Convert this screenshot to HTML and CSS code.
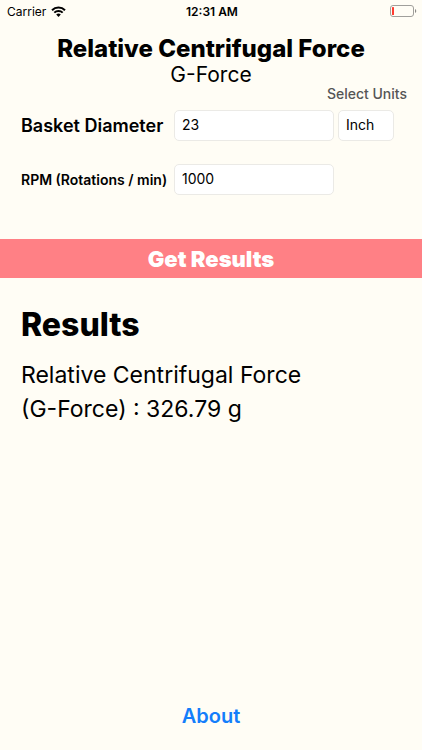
FILE: index.html
```html
<!DOCTYPE html>
<html lang="en">
  <head>
    <meta charset="UTF-8" />
    <meta name="viewport" content="width=device-width, initial-scale=1.0" />
    <link rel="stylesheet" href="styles.css">
    <title>Relative Centrifugal Force</title>
  </head>

  <body>
    <div class="status-bar">
      <div class="carrier">
        <span>Carrier</span>
        <svg class="wifi" viewBox="0 0 15 11" width="15" height="11">
          <path d="M1 4.2a9.2 9.2 0 0 1 13 0M3.3 6.6a6 6 0 0 1 8.4 0" fill="none" stroke="#000" stroke-width="2" />
          <path d="M7.5 11L5.2 8.6a3.3 3.3 0 0 1 4.6 0z" />
        </svg>
      </div>
      <div class="time">12:31 AM</div>
      <div class="battery">
        <svg viewBox="0 0 27 12" width="27" height="12">
          <rect x="0.5" y="0.5" width="23" height="11" rx="2.5" fill="none" stroke="#a09f9b" />
          <rect x="2" y="2" width="2" height="8" rx="0.6" fill="#ff3b30" />
          <path d="M25 4a2.2 2.2 0 0 1 0 4z" fill="#8c8b88" />
        </svg>
      </div>
    </div>

    <header class="heading">
      <h1>Relative Centrifugal Force</h1>
      <p>G-Force</p>
    </header>

    <form class="calc">
      <label class="units-label" for="units">Select Units</label>
      <div class="row">
        <label for="diameter">Basket Diameter</label>
        <input class="number" id="diameter" type="text" value="23">
        <select id="units">
          <option>Inch</option>
          <option>cm</option>
          <option>mm</option>
        </select>
      </div>
      <div class="row">
        <label class="small" for="rpm">RPM (Rotations / min)</label>
        <input class="number" id="rpm" type="text" value="1000">
      </div>
      <button class="submit" type="button">Get Results</button>
    </form>

    <main class="results">
      <h2>Results</h2>
      <p>Relative Centrifugal Force (G-Force) : 326.79 g</p>
    </main>

    <footer class="footer">
      <a href="#about">About</a>
    </footer>
  </body>
</html>
```
FILE: styles.css
```css
* {
  box-sizing: border-box;
}

body {
  display: flex;
  flex-direction: column;
  min-height: 100vh;
  margin: 0;
  background-color: #fffdf5;
  color: #000;
  font-family: Inter, "Liberation Sans", sans-serif;
}

h1, h2, p {
  margin: 0;
}

.status-bar {
  display: grid;
  grid-template-columns: 1fr auto 1fr;
  align-items: center;
  height: 22px;
  padding: 0 5px 0 7px;
  font-size: 12px;
}

.carrier {
  display: flex;
  align-items: center;
  gap: 5px;
}

.time {
  font-weight: 600;
}

.battery {
  display: flex;
  justify-content: flex-end;
}

.heading {
  padding-top: 13px;
  text-align: center;
}

.heading h1 {
  font-size: 24px;
  font-weight: 800;
  line-height: 28px;
}

.heading p {
  font-size: 21px;
  line-height: 24px;
}

.calc {
  display: flex;
  flex-direction: column;
}

.units-label {
  align-self: flex-end;
  padding-right: 15px;
  color: #555;
  font-size: 14px;
  font-weight: 500;
  line-height: 14px;
}

.row {
  display: flex;
  align-items: center;
  gap: 4px;
  margin: 9px 28px 14px 21px;
}

.row label {
  width: 149px;
  font-size: 18px;
  font-weight: 600;
  white-space: nowrap;
}

.row .small {
  font-size: 14px;
}

.number, select {
  height: 31px;
  padding: 0 7px 2px;
  border: 1px solid #ebeae6;
  border-radius: 5px;
  background-color: #fff;
  color: #000;
  font-family: inherit;
  font-size: 14px;
}

.number {
  width: 160px;
}

select {
  width: 56px;
  appearance: none;
}

.submit {
  height: 39px;
  margin-top: 30px;
  padding: 0;
  border: none;
  background-color: #ff8085;
  color: #fff;
  font-family: inherit;
  font-size: 22px;
  font-weight: 900;
}

.results {
  flex: 1;
  padding: 27px 21px;
}

.results h2 {
  font-size: 32px;
  font-weight: 800;
  line-height: 40px;
}

.results p {
  max-width: 320px;
  margin-top: 13px;
  font-size: 23px;
  line-height: 34px;
}

.footer {
  padding-bottom: 21px;
  text-align: center;
}

.footer a {
  color: #147efb;
  font-size: 20px;
  font-weight: 600;
  line-height: 26px;
  text-decoration: none;
}
```
